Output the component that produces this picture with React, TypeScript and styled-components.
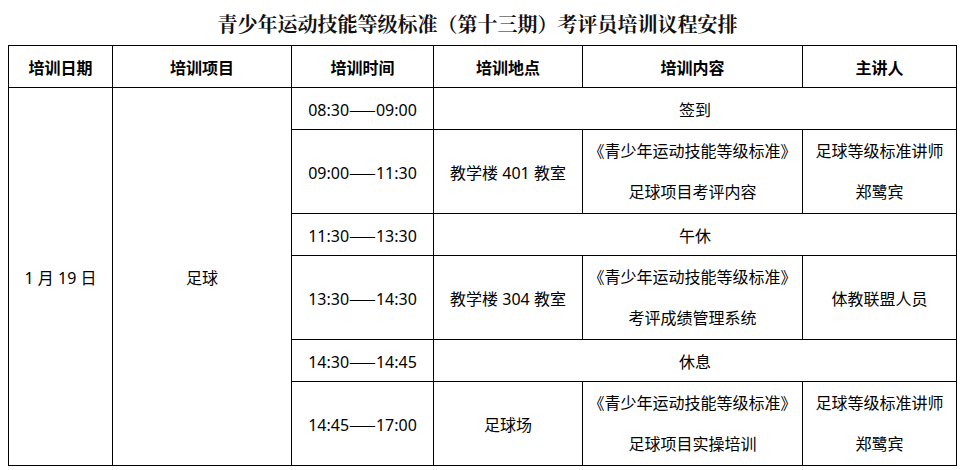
import React from "react";
import styled, { createGlobalStyle } from "styled-components";

const Global = createGlobalStyle`
  html, body { margin: 0; padding: 0; background: #fff; }
  body { padding: 8px; font-family: "Noto Sans", "Noto Sans CJK SC", sans-serif; color: #000; }
`;

const Title = styled.h1`
  margin: 0 0 5px;
  height: 32px;
  line-height: 32px;
  text-align: center;
  font-family: "Noto Serif CJK SC", "Noto Sans CJK SC", serif;
  font-size: 20px;
  font-weight: 700;
  color: #111;
  padding-right: 10px;
`;

const Table = styled.table`
  width: 948px;
  border-collapse: collapse;
  table-layout: fixed;
  font-size: 16px;
`;

const Row = styled.tr<{ $tall?: boolean }>`
  height: ${(p) => (p.$tall ? 84 : 42)}px;
`;

const Th = styled.th`
  border: 1px solid #000;
  padding: 0;
  font-weight: 700;
  text-align: center;
  vertical-align: middle;
`;

const Td = styled.td`
  border: 1px solid #000;
  padding: 0;
  text-align: center;
  vertical-align: middle;
  white-space: nowrap;
`;

const Line = styled.div`
  line-height: 41px;
`;

const Dash = styled.span`
  font-family: "Noto Sans CJK SC", sans-serif;
`;

const cols = [104, 179, 142, 149, 220, 154];

type Slot =
  | { time: [string, string]; pause: string }
  | { time: [string, string]; place: string; content: [string, string]; speaker: string[] };

const slots: Slot[] = [
  { time: ["08:30", "09:00"], pause: "签到" },
  {
    time: ["09:00", "11:30"],
    place: "教学楼 401 教室",
    content: ["《青少年运动技能等级标准》", "足球项目考评内容"],
    speaker: ["足球等级标准讲师", "郑鹭宾"],
  },
  { time: ["11:30", "13:30"], pause: "午休" },
  {
    time: ["13:30", "14:30"],
    place: "教学楼 304 教室",
    content: ["《青少年运动技能等级标准》", "考评成绩管理系统"],
    speaker: ["体教联盟人员"],
  },
  { time: ["14:30", "14:45"], pause: "休息" },
  {
    time: ["14:45", "17:00"],
    place: "足球场",
    content: ["《青少年运动技能等级标准》", "足球项目实操培训"],
    speaker: ["足球等级标准讲师", "郑鹭宾"],
  },
];

export default function App() {
  return (
    <>
      <Global />
      <Title>青少年运动技能等级标准（第十三期）考评员培训议程安排</Title>
      <Table>
        <colgroup>
          {cols.map((w, i) => (
            <col key={i} style={{ width: w }} />
          ))}
        </colgroup>
        <thead>
          <Row>
            <Th>培训日期</Th>
            <Th>培训项目</Th>
            <Th>培训时间</Th>
            <Th>培训地点</Th>
            <Th>培训内容</Th>
            <Th>主讲人</Th>
          </Row>
        </thead>
        <tbody>
          {slots.map((s, i) => {
            const tall = !("pause" in s);
            return (
              <Row key={i} $tall={tall}>
                {i === 0 && (
                  <>
                    <Td rowSpan={slots.length}>1 月 19 日</Td>
                    <Td rowSpan={slots.length}>足球</Td>
                  </>
                )}
                <Td>
                  {s.time[0]}
                  <Dash>——</Dash>
                  {s.time[1]}
                </Td>
                {"pause" in s ? (
                  <Td colSpan={3}>{s.pause}</Td>
                ) : (
                  <>
                    <Td>{s.place}</Td>
                    <Td>
                      {s.content.map((c) => (
                        <Line key={c}>{c}</Line>
                      ))}
                    </Td>
                    <Td>
                      {s.speaker.length > 1
                        ? s.speaker.map((c) => <Line key={c}>{c}</Line>)
                        : s.speaker[0]}
                    </Td>
                  </>
                )}
              </Row>
            );
          })}
        </tbody>
      </Table>
    </>
  );
}
